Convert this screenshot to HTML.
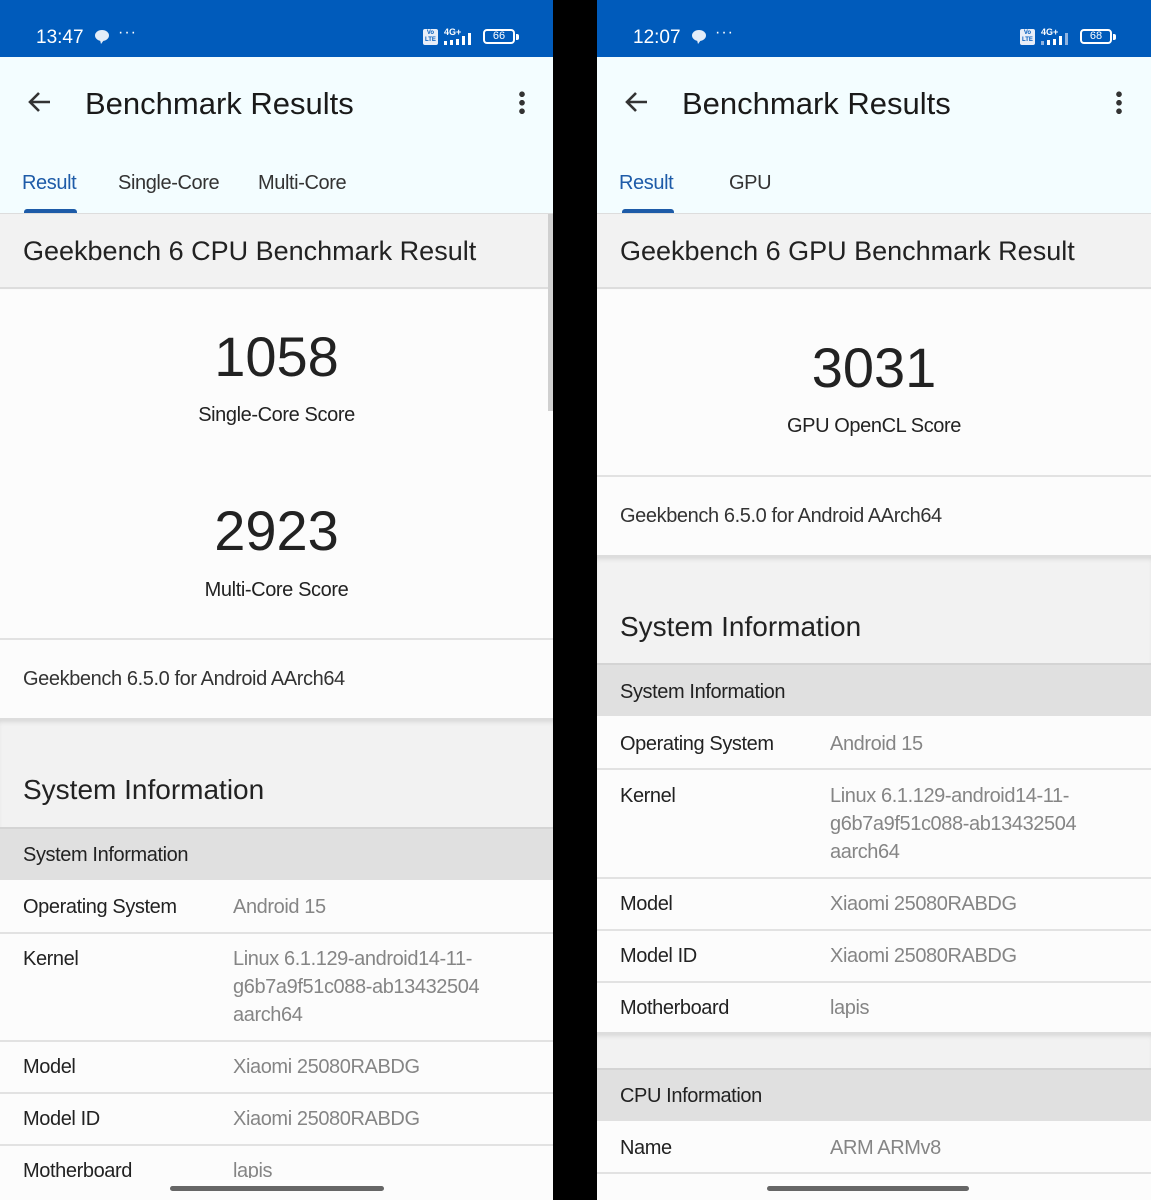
<!DOCTYPE html>
<html><head><meta charset="utf-8">
<style>
*{margin:0;padding:0;box-sizing:border-box}
body{width:1151px;height:1200px;background:#000;position:relative;overflow:hidden;font-family:"Liberation Sans",sans-serif;color:#222}
.p{position:absolute;top:0;height:1200px;overflow:hidden;background:#fafafa}
.b{position:absolute;left:0;right:0}
.t{position:absolute;white-space:nowrap;line-height:1;margin-top:1px}
.t[style*="font-size:20px"]{letter-spacing:-0.4px}
.sb{background:#005bbb;top:0;height:57px}
.hd{background:#f3fdff;top:57px;height:156px}
.g{background:#f2f2f2}
.w{background:#fcfcfc}
.sub{background:#e0e0e0}
.ln{border-top:2px solid #e2e2e2}
.v{color:#858585}
.vo{position:absolute;left:423px;top:29px;width:15px;height:16px;background:#e8eef8;border-radius:2px;font-size:6px;line-height:7px;color:#005bbb;text-align:center;font-weight:bold;padding-top:1px}
.bat{position:absolute;left:483px;top:29px;width:32px;height:15px;border:2px solid #fff;border-radius:4px;color:#fff;font-size:11px;text-align:center;line-height:11px}
.bat:after{content:"";position:absolute;right:-6px;top:3px;width:3px;height:6px;background:#fff;border-radius:0 2px 2px 0}
</style></head><body>

<!-- LEFT -->
<div class="p" style="left:0;width:553px">
 <div class="b sb"></div>
 <div class="t" style="left:36px;top:27px;font-size:19px;color:#fff">13:47</div>
 <svg style="position:absolute;left:94px;top:29px" width="16" height="16" viewBox="0 0 16 16"><ellipse cx="8" cy="6.5" rx="7" ry="5.5" fill="#e4edf8"/><path d="M6 11l1 4 3-4z" fill="#e4edf8"/></svg>
 <div class="t" style="left:118px;top:24px;font-size:16px;color:#fff;letter-spacing:1px">···</div>
 <div class="vo">Vo<br>LTE</div>
 <div class="t" style="left:444px;top:27px;font-size:9px;color:#fff;font-weight:bold">4G+</div>
 <svg style="position:absolute;left:443px;top:32px" width="34" height="14" viewBox="0 0 34 14"><rect x="1" y="9" width="3" height="4" fill="#fff"/><rect x="7" y="8" width="3" height="5" fill="#fff"/><rect x="13" y="7" width="3" height="6" fill="#fff"/><rect x="19" y="4" width="3" height="9" fill="#fff"/><rect x="25" y="1" width="3" height="12" fill="#fff"/></svg>
 <div class="bat">66</div>
 <div class="b hd"></div>
 <svg style="position:absolute;left:26px;top:90px" width="26" height="24" viewBox="0 0 26 24"><path d="M24 12H4M13 3L4 12l9 9" stroke="#333" stroke-width="2.6" fill="none"/></svg>
 <div class="t" style="left:85px;top:87px;font-size:31px;color:#1a1a1a">Benchmark Results</div>
 <div style="position:absolute;left:519px;top:90px;width:6px;height:24px;background:radial-gradient(circle,#333 2.6px,transparent 3px) 0 0/6px 8.5px"></div>
 <div class="t" style="left:22px;top:172px;font-size:20px;color:#1d5ba8">Result</div>
 <div class="t" style="left:118px;top:172px;font-size:20px;color:#333">Single-Core</div>
 <div class="t" style="left:258px;top:172px;font-size:20px;color:#333">Multi-Core</div>
 <div style="position:absolute;left:24px;top:209px;width:53px;height:5px;background:#1d5ba8;border-radius:3px 3px 0 0"></div>

 <div class="b g" style="top:213px;height:76px;border-top:1px solid #ddd;border-bottom:2px solid #ddd"></div>
 <div class="t" style="left:23px;top:237px;font-size:27px;color:#222">Geekbench 6 CPU Benchmark Result</div>
 <div class="b w" style="top:290px;height:348px"></div>
 <div class="t" style="left:0;width:553px;text-align:center;top:328px;font-size:56px;color:#222">1058</div>
 <div class="t" style="left:0;width:553px;text-align:center;top:404px;font-size:20px">Single-Core Score</div>
 <div class="t" style="left:0;width:553px;text-align:center;top:502px;font-size:56px;color:#222">2923</div>
 <div class="t" style="left:0;width:553px;text-align:center;top:579px;font-size:20px">Multi-Core Score</div>
 <div class="b w ln" style="top:638px;height:80px"></div>
 <div class="t" style="left:23px;top:668px;font-size:20px;color:#333">Geekbench 6.5.0 for Android AArch64</div>
 <div class="b g" style="top:718px;height:109px;border-top:2px solid #ddd;box-shadow:inset 0 4px 6px -3px rgba(0,0,0,.15)"></div>
 <div class="t" style="left:23px;top:775px;font-size:28px">System Information</div>
 <div class="b sub" style="top:827px;height:53px;border-top:2px solid #d4d4d4"></div>
 <div class="t" style="left:23px;top:844px;font-size:20px">System Information</div>
 <div class="b w" style="top:880px;height:52px"></div>
 <div class="t" style="left:23px;top:896px;font-size:20px">Operating System</div>
 <div class="t v" style="left:233px;top:896px;font-size:20px">Android 15</div>
 <div class="b w ln" style="top:932px;height:108px"></div>
 <div class="t" style="left:23px;top:948px;font-size:20px">Kernel</div>
 <div class="t v" style="left:233px;top:948px;font-size:20px;line-height:28px;white-space:normal;width:300px;margin-top:-3px">Linux 6.1.129-android14-11-<br>g6b7a9f51c088-ab13432504<br>aarch64</div>
 <div class="b w ln" style="top:1040px;height:52px"></div>
 <div class="t" style="left:23px;top:1056px;font-size:20px">Model</div>
 <div class="t v" style="left:233px;top:1056px;font-size:20px">Xiaomi 25080RABDG</div>
 <div class="b w ln" style="top:1092px;height:52px"></div>
 <div class="t" style="left:23px;top:1108px;font-size:20px">Model ID</div>
 <div class="t v" style="left:233px;top:1108px;font-size:20px">Xiaomi 25080RABDG</div>
 <div class="b w ln" style="top:1144px;height:60px"></div>
 <div class="t" style="left:23px;top:1160px;font-size:20px">Motherboard</div>
 <div class="t v" style="left:233px;top:1160px;font-size:20px">lapis</div>
 <div class="b" style="top:1178px;height:30px;background:#fcfcfc"></div>
 <div style="position:absolute;left:548px;top:214px;width:5px;height:197px;background:#d0d0d0"></div>
 <div style="position:absolute;left:170px;top:1186px;width:214px;height:5px;background:#666;border-radius:3px"></div>
</div>

<!-- RIGHT -->
<div class="p" style="left:597px;width:554px">
 <div class="b sb"></div>
 <div class="t" style="left:36px;top:27px;font-size:19px;color:#fff">12:07</div>
 <svg style="position:absolute;left:94px;top:29px" width="16" height="16" viewBox="0 0 16 16"><ellipse cx="8" cy="6.5" rx="7" ry="5.5" fill="#e4edf8"/><path d="M6 11l1 4 3-4z" fill="#e4edf8"/></svg>
 <div class="t" style="left:118px;top:24px;font-size:16px;color:#fff;letter-spacing:1px">···</div>
 <div class="vo">Vo<br>LTE</div>
 <div class="t" style="left:444px;top:27px;font-size:9px;color:#fff;font-weight:bold">4G+</div>
 <svg style="position:absolute;left:443px;top:32px" width="34" height="14" viewBox="0 0 34 14"><rect x="1" y="9" width="3" height="4" fill="#8fb3e0"/><rect x="7" y="8" width="3" height="5" fill="#fff"/><rect x="13" y="7" width="3" height="6" fill="#fff"/><rect x="19" y="4" width="3" height="9" fill="#fff"/><rect x="25" y="1" width="3" height="12" fill="#8fb3e0"/></svg>
 <div class="bat">68</div>
 <div class="b hd"></div>
 <svg style="position:absolute;left:26px;top:90px" width="26" height="24" viewBox="0 0 26 24"><path d="M24 12H4M13 3L4 12l9 9" stroke="#333" stroke-width="2.6" fill="none"/></svg>
 <div class="t" style="left:85px;top:87px;font-size:31px;color:#1a1a1a">Benchmark Results</div>
 <div style="position:absolute;left:519px;top:90px;width:6px;height:24px;background:radial-gradient(circle,#333 2.6px,transparent 3px) 0 0/6px 8.5px"></div>
 <div class="t" style="left:22px;top:172px;font-size:20px;color:#1d5ba8">Result</div>
 <div class="t" style="left:132px;top:172px;font-size:20px;color:#333">GPU</div>
 <div style="position:absolute;left:25px;top:209px;width:52px;height:5px;background:#1d5ba8;border-radius:3px 3px 0 0"></div>

 <div class="b g" style="top:213px;height:76px;border-top:1px solid #ddd;border-bottom:2px solid #ddd"></div>
 <div class="t" style="left:23px;top:237px;font-size:27px;color:#222">Geekbench 6 GPU Benchmark Result</div>
 <div class="b w" style="top:290px;height:185px"></div>
 <div class="t" style="left:0;width:554px;text-align:center;top:339px;font-size:56px;color:#222">3031</div>
 <div class="t" style="left:0;width:554px;text-align:center;top:415px;font-size:20px">GPU OpenCL Score</div>
 <div class="b w ln" style="top:475px;height:80px"></div>
 <div class="t" style="left:23px;top:505px;font-size:20px;color:#333">Geekbench 6.5.0 for Android AArch64</div>
 <div class="b g" style="top:555px;height:108px;border-top:2px solid #ddd;box-shadow:inset 0 4px 6px -3px rgba(0,0,0,.15)"></div>
 <div class="t" style="left:23px;top:612px;font-size:28px">System Information</div>
 <div class="b sub" style="top:663px;height:53px;border-top:2px solid #d4d4d4"></div>
 <div class="t" style="left:23px;top:681px;font-size:20px">System Information</div>
 <div class="b w" style="top:716px;height:52px"></div>
 <div class="t" style="left:23px;top:733px;font-size:20px">Operating System</div>
 <div class="t v" style="left:233px;top:733px;font-size:20px">Android 15</div>
 <div class="b w ln" style="top:768px;height:109px"></div>
 <div class="t" style="left:23px;top:785px;font-size:20px">Kernel</div>
 <div class="t v" style="left:233px;top:785px;font-size:20px;line-height:28px;white-space:normal;width:300px;margin-top:-3px">Linux 6.1.129-android14-11-<br>g6b7a9f51c088-ab13432504<br>aarch64</div>
 <div class="b w ln" style="top:877px;height:52px"></div>
 <div class="t" style="left:23px;top:893px;font-size:20px">Model</div>
 <div class="t v" style="left:233px;top:893px;font-size:20px">Xiaomi 25080RABDG</div>
 <div class="b w ln" style="top:929px;height:52px"></div>
 <div class="t" style="left:23px;top:945px;font-size:20px">Model ID</div>
 <div class="t v" style="left:233px;top:945px;font-size:20px">Xiaomi 25080RABDG</div>
 <div class="b w ln" style="top:981px;height:52px"></div>
 <div class="t" style="left:23px;top:997px;font-size:20px">Motherboard</div>
 <div class="t v" style="left:233px;top:997px;font-size:20px">lapis</div>
 <div class="b g" style="top:1032px;height:36px;border-top:2px solid #ddd;box-shadow:inset 0 4px 6px -3px rgba(0,0,0,.15)"></div>
 <div class="b sub" style="top:1068px;height:53px;border-top:2px solid #d4d4d4"></div>
 <div class="t" style="left:23px;top:1085px;font-size:20px">CPU Information</div>
 <div class="b w" style="top:1121px;height:52px"></div>
 <div class="t" style="left:23px;top:1137px;font-size:20px">Name</div>
 <div class="t v" style="left:233px;top:1137px;font-size:20px">ARM ARMv8</div>
 <div class="b w ln" style="top:1172px;height:40px"></div>
 <div style="position:absolute;left:170px;top:1186px;width:202px;height:5px;background:#666;border-radius:3px"></div>
</div>
</body></html>
